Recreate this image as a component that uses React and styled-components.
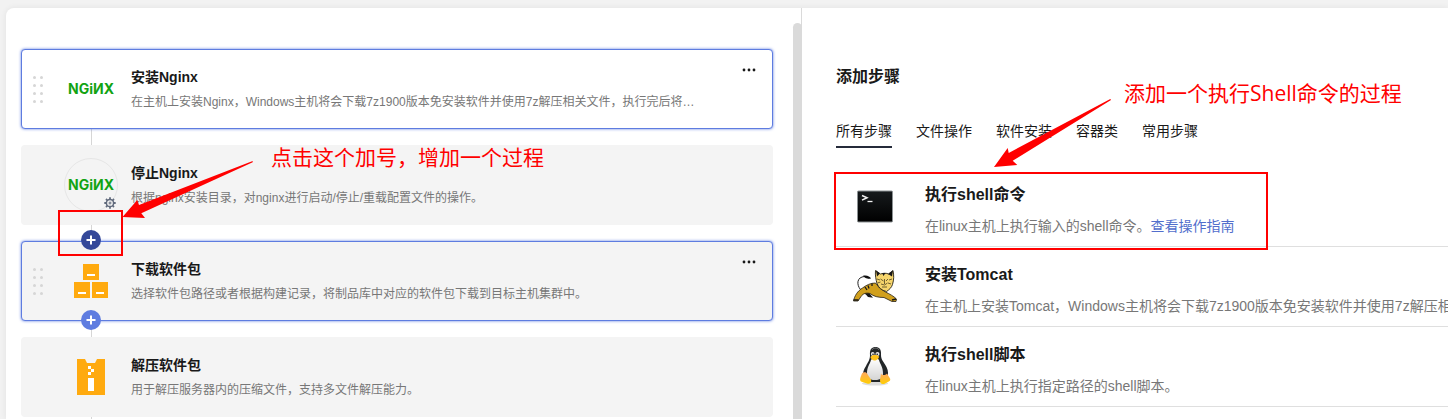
import React from 'react';
import styled, { createGlobalStyle, css } from 'styled-components';

const GlobalStyle = createGlobalStyle`
  *, *::before, *::after { box-sizing: border-box; }
  body {
    margin: 0;
    background: #f2f2f2;
    color: #191919;
    font-family: "Liberation Sans", "Noto Sans CJK SC", sans-serif;
  }
  button { font: inherit; color: inherit; background: none; border: 0; padding: 0; cursor: pointer; }
`;

const Page = styled.main`
  height: 100vh;
  padding: 8px 0 0 6px;
  overflow: hidden;
`;

const Workspace = styled.div`
  display: grid;
  grid-template-columns: minmax(0, 796fr) minmax(0, 646fr);
  height: 100%;
  background: #fff;
  border-top-left-radius: 8px;
  box-shadow: 0 0 6px rgba(0, 0, 0, 0.07);
`;

const FlowPane = styled.section`
  position: relative;
  padding: 41px 28px 0 15px;
  border-right: 1px solid #dadada;
`;

const ScrollThumb = styled.div`
  position: absolute;
  top: 15px;
  right: -1px;
  bottom: 0;
  width: 9px;
  background: #dadada;
  border-radius: 5px 5px 0 0;
`;

const StepList = styled.ol`
  display: flex;
  flex-direction: column;
  margin: 0;
  padding: 0;
  list-style: none;
`;

const StepItem = styled.li`
  &::after {
    content: "";
    display: block;
    height: 16px;
    margin-left: 70px;
    border-left: 1px solid #d6d6d6;
  }
`;

const Card = styled.article`
  position: relative;
  display: grid;
  grid-template-columns: 10px 54px minmax(0, 1fr) 24px;
  align-items: center;
  height: 80px;
  padding: 0 11px;
  border: 1px solid transparent;
  border-radius: 4px;
  background: ${(p) => (p.$plain ? '#fff' : '#f4f4f4')};
  ${(p) =>
    p.$active &&
    css`
      border-color: #5e7ce0;
      box-shadow: 0 0 3px #5e7ce0;
    `}
`;

const DragHandle = styled.div`
  display: grid;
  grid-template-columns: 3px 3px;
  gap: 5px 4px;
  span {
    width: 3px;
    height: 3px;
    border-radius: 50%;
    background: #d6d6d6;
  }
`;

const CardIcon = styled.div`
  grid-column: 2;
  position: relative;
  width: 54px;
  height: 54px;
  margin-left: 21px;
  border-radius: 50%;
  border: 1px solid ${(p) => (p.$ring ? '#e6e6e6' : 'transparent')};
  > svg:first-child { display: block; margin: -1px; }
`;

const Gear = styled.svg`
  position: absolute;
  right: 1px;
  bottom: 2px;
`;

const CardText = styled.div`
  grid-column: 3;
  margin: 0 37px 0 34px;
`;

const CardTitle = styled.h3`
  margin: 0 0 4px;
  font-size: 14px;
  line-height: 22px;
  font-weight: 700;
`;

const CardDesc = styled.p`
  margin: 0;
  overflow: hidden;
  color: #777;
  font-size: 12px;
  line-height: 20px;
  white-space: nowrap;
  text-overflow: ellipsis;
`;

const MoreButton = styled.button`
  align-self: start;
  height: 24px;
  margin-top: 8px;
  svg { display: block; margin: auto; }
`;

const AddButton = styled.button`
  position: absolute;
  left: 59px;
  ${(p) => (p.$edge === 'top' ? 'top: -12px;' : 'bottom: -10px;')}
  width: 20px;
  height: 20px;
  border-radius: 50%;
  background: ${(p) => (p.$edge === 'top' ? '#344899' : '#5e7ce0')};
  svg { display: block; }
`;

const LibraryPane = styled.section`
  position: relative;
  display: flex;
  flex-direction: column;
  padding: 57px 0 0 34px;
  overflow: hidden;
`;

const PaneTitle = styled.h2`
  margin: 0 0 31px;
  font-size: 16px;
  line-height: 24px;
  font-weight: 700;
`;

const Tabs = styled.nav`
  display: flex;
  gap: 24px;
  margin-bottom: 19px;
`;

const Tab = styled.button`
  height: 28px;
  padding-bottom: 4px;
  border-bottom: 2px solid ${(p) => (p.$active ? '#252b3a' : 'transparent')};
  font-size: 14px;
  line-height: 22px;
  white-space: nowrap;
`;

const Library = styled.ul`
  display: flex;
  flex-direction: column;
  margin: 0;
  padding: 0;
  list-style: none;
`;

const LibraryRow = styled.li`
  display: flex;
  gap: 26px;
  height: 80px;
  padding: 15px 0 0 15px;
  border-bottom: 1px solid #dfdfdf;
  white-space: nowrap;
  > svg { flex: none; }
`;

const RowText = styled.div`
  display: flex;
  flex-direction: column;
  gap: 9px;
  padding-top: 1px;
`;

const RowTitle = styled.h3`
  margin: 0;
  font-size: 16px;
  line-height: 24px;
  font-weight: 700;
`;

const RowDesc = styled.p`
  margin: 0;
  color: #777;
  font-size: 14px;
  line-height: 20px;
`;

const GuideLink = styled.a`
  color: #526ecc;
  text-decoration: none;
`;

const Highlight = styled.div`
  position: absolute;
  left: ${(p) => p.$x}px;
  top: ${(p) => p.$y}px;
  width: ${(p) => p.$w}px;
  height: ${(p) => p.$h}px;
  border: 2px solid #f00;
  pointer-events: none;
`;

const Arrow = styled.svg`
  position: absolute;
  left: ${(p) => p.$x}px;
  top: ${(p) => p.$y}px;
  fill: #f00;
  pointer-events: none;
`;

const Callout = styled.div`
  position: absolute;
  left: ${(p) => p.$x}px;
  top: ${(p) => p.$y}px;
  color: #f00;
  font-family: "Open Sans", "Noto Sans CJK SC", sans-serif;
  font-size: 21px;
  line-height: 28px;
  white-space: nowrap;
  pointer-events: none;
`;

const NginxLogo = () => (
  <svg width="54" height="54" viewBox="0 0 54 54" role="img" aria-label="Nginx">
    <text x="27" y="32" textAnchor="middle" fontFamily="Inter" fontSize="14" fontWeight="700" fill="#12a312">
      NGiИX
    </text>
  </svg>
);

const PackageIcon = () => (
  <svg width="54" height="54" viewBox="0 0 54 54" aria-hidden="true">
    <g fill="#ffaa0f">
      <rect x="19" y="10" width="16" height="16" />
      <rect x="10" y="28" width="16" height="16" />
      <rect x="28" y="28" width="16" height="16" />
    </g>
    <path d="M23 21h8M14 39h8M32 39h8" stroke="#fff" strokeWidth="2" />
  </svg>
);

const ZipIcon = () => (
  <svg width="54" height="54" viewBox="0 0 54 54" aria-hidden="true">
    <path d="M13 9h8l2 4h8l2-4h8v36H13z" fill="#ffaa0f" />
    <path d="M24 16h3v3h-3zM27 19h3v3h-3zM24 22h3v3h-3zM24 28h6v13h-6z" fill="#fff" />
  </svg>
);

const GearIcon = () => (
  <Gear width="12" height="12" viewBox="0 0 12 12" aria-hidden="true">
    <g fill="none" stroke="#626b7d">
      <circle cx="6" cy="6" r="3.6" strokeWidth="1.500" />
      <path d="M6 .3v2M6 9.700v2M.3 6h2M9.700 6h2M2 2l1.300 1.300M8.700 8.700L10 10M10 2L8.700 3.300M3.300 8.700L2 10" strokeWidth="1.800" />
      <circle cx="6" cy="6" r="1" strokeWidth="1" />
    </g>
  </Gear>
);

const TerminalIcon = () => (
  <svg width="48" height="48" viewBox="0 0 48 48" aria-hidden="true">
    <defs>
      <linearGradient id="screen" x1="0" y1="0" x2="0" y2="1">
        <stop offset="0" stopColor="#171b1d" />
        <stop offset="1" stopColor="#000" />
      </linearGradient>
    </defs>
    <rect x="6.500" y="9" width="35" height="31" rx="1" fill="url(#screen)" stroke="#8c9294" />
    <path d="M11 13.500l5 2.200-5 2.400" fill="none" stroke="#f2f2f2" strokeWidth="1.500" />
    <path d="M16.500 19.500h5" stroke="#f2f2f2" strokeWidth="1.300" />
  </svg>
);

const TomcatIcon = () => (
  <svg width="48" height="48" viewBox="0 0 48 48" aria-hidden="true">
    <path d="M11 29C6 25 5 17 11 15c3-1 5 0 7 1" fill="none" stroke="#222" strokeWidth="1" />
    <path d="M12 13.800c4-.9 7 .8 8 2.700-3 .8-6 .2-8-2.700z" fill="#111" />
    <path d="M10 27c2 4 5 5 7 8l5 .8-3-3.800-3-5z" fill="#161616" />
    <path d="M2.500 39c1-5 4-10 9-13 4-3 8-5 13-5l4 5 6 4c4 2 8 4 11 7l-.5 2.500h-4l-8-4c-6 0-10-1-14-4-4-1-7 0-9 3L7 39z" fill="#d1a01d" stroke="#252015" strokeWidth=".8" />
    <path d="M14 25l2 3M17 23.500l1 3M21 21.500v2.500" stroke="#171717" strokeWidth="1.300" />
    <path d="M24.500 8.500l5 3.500c3-1 6-1 8 0l4.500-3.500c1 5 1 9-.5 14-1 3-3 5-6 7-5-1-8-4-9.500-8-1-4-2-8-1.500-13z" fill="#f6d56c" stroke="#252015" strokeWidth=".9" />
    <path d="M25 8.500l4 3-3 3zM42 8.500l-5 3.500 4 2.500zM31 11l1.500 3 2-3z" fill="#171717" />
    <path d="M26 17l3 1M26.500 21l3-1M41 17l-3 1M40 22l-3-1M29.500 17l3 2M37 17l-2 2M33.500 17v5M30 22l3.500 1 3-2M31 25h5" fill="none" stroke="#4d4122" strokeWidth=".8" />
    <path d="M2.500 38h5M41 38l4-1" stroke="#171717" strokeWidth="1.500" />
  </svg>
);

const TuxIcon = () => (
  <svg width="48" height="48" viewBox="0 0 48 48" aria-hidden="true">
    <defs>
      <linearGradient id="belly" x1="0" y1="0" x2="0" y2="1">
        <stop offset="0" stopColor="#fff" />
        <stop offset="1" stopColor="#d4d4d4" />
      </linearGradient>
      <linearGradient id="foot" x1="0" y1="0" x2="0" y2="1">
        <stop offset="0" stopColor="#ffa860" />
        <stop offset="1" stopColor="#ffcf00" />
      </linearGradient>
    </defs>
    <ellipse cx="24" cy="41.500" rx="13" ry="2" fill="#ddd" />
    <path d="M19 13c-.5-6 2-8 5.500-8s6 2 5.500 8c0 5 3 7 5.500 12 2 4 2 8 .5 11l-5 4H17l-5-4c-1-4 1-9 3-12 2-4 4-6 4-11z" fill="#222628" />
    <path d="M21 8c1-2.500 6-2.500 7 0" fill="none" stroke="#777" strokeWidth="1" />
    <path d="M20 18c1-2 7-2 8 0 1 4 4 7 4 13 0 5-2 7-8 7s-8-2-8-7c0-6 3-9 4-13z" fill="url(#belly)" />
    <ellipse cx="21.700" cy="12" rx="1.800" ry="2" fill="#e8e8e8" />
    <ellipse cx="26.500" cy="12" rx="2" ry="2" fill="#e8e8e8" />
    <circle cx="22" cy="12.300" r=".8" fill="#111" />
    <circle cx="26.200" cy="12.300" r=".8" fill="#111" />
    <path d="M19.500 15c2-2.500 6-2.500 8.500-.5 0 2-2.500 4-4.500 4s-4-2-4-3.500z" fill="#ffc21a" />
    <path d="M11 31.500c1-1.500 4-2 5 0l4 6c1 3-1 5-4 4l-6-2c-2-2 0-5 1-8z" fill="url(#foot)" />
    <path d="M30 31.500c1 2 4 2 6 0l3 5c1 2-1 3-3 4l-3 1.500c-3 .5-4-1-4-4z" fill="url(#foot)" />
  </svg>
);

const Plus = () => (
  <svg width="20" height="20" viewBox="0 0 20 20" aria-hidden="true">
    <path d="M10 5.500v9M5.500 10h9" stroke="#fff" strokeWidth="2" />
  </svg>
);

const steps = [
  {
    title: '安装Nginx',
    desc: '在主机上安装Nginx，Windows主机将会下载7z1900版本免安装软件并使用7z解压相关文件，执行完后将自动启动Nginx服务。',
    icon: <NginxLogo />,
    active: true,
    plain: true,
  },
  {
    title: '停止Nginx',
    desc: '根据nginx安装目录，对nginx进行启动/停止/重载配置文件的操作。',
    icon: <NginxLogo />,
    ring: true,
  },
  {
    title: '下载软件包',
    desc: '选择软件包路径或者根据构建记录，将制品库中对应的软件包下载到目标主机集群中。',
    icon: <PackageIcon />,
    active: true,
    insert: true,
  },
  {
    title: '解压软件包',
    desc: '用于解压服务器内的压缩文件，支持多文件解压能力。',
    icon: <ZipIcon />,
  },
];

const tabs = ['所有步骤', '文件操作', '软件安装', '容器类', '常用步骤'];

const library = [
  { title: '执行shell命令', desc: '在linux主机上执行输入的shell命令。', link: '查看操作指南', icon: <TerminalIcon /> },
  {
    title: '安装Tomcat',
    desc: '在主机上安装Tomcat，Windows主机将会下载7z1900版本免安装软件并使用7z解压相关文件。',
    icon: <TomcatIcon />,
  },
  { title: '执行shell脚本', desc: '在linux主机上执行指定路径的shell脚本。', icon: <TuxIcon /> },
];

function StepCard({ step }) {
  return (
    <Card $active={step.active} $plain={step.plain}>
      {step.active && (
        <DragHandle>
          {Array.from({ length: 8 }, (_, i) => (
            <span key={i} />
          ))}
        </DragHandle>
      )}
      <CardIcon $ring={step.ring}>
        {step.icon}
        {step.ring && <GearIcon />}
      </CardIcon>
      <CardText>
        <CardTitle>{step.title}</CardTitle>
        <CardDesc>{step.desc}</CardDesc>
      </CardText>
      {step.active && (
        <MoreButton type="button" aria-label="更多">
          <svg width="14" height="4" viewBox="0 0 14 4" fill="#191919" aria-hidden="true">
            <circle cx="2" cy="2" r="1.400" />
            <circle cx="7" cy="2" r="1.400" />
            <circle cx="12" cy="2" r="1.400" />
          </svg>
        </MoreButton>
      )}
      {step.insert && (
        <>
          <AddButton type="button" $edge="top" aria-label="在上方添加步骤"><Plus /></AddButton>
          <AddButton type="button" $edge="bottom" aria-label="在下方添加步骤"><Plus /></AddButton>
        </>
      )}
    </Card>
  );
}

export default function App() {
  return (
    <>
      <GlobalStyle />
      <Page>
        <Workspace>
          <FlowPane>
            <StepList>
              {steps.map((step) => (
                <StepItem key={step.title}>
                  <StepCard step={step} />
                </StepItem>
              ))}
            </StepList>
            <ScrollThumb />
            <Highlight $x={52} $y={202} $w={65} $h={46} />
            <Arrow $x={116} $y={152} width="132" height="60" viewBox="122 160 132 60" aria-hidden="true">
              <path d="M122.500 217L137.300 200l1.700 5L252.700 161v1.300L141.300 213.300l3.700 4.700z" />
            </Arrow>
            <Callout $x={265} $y={135}>点击这个加号，增加一个过程</Callout>
          </FlowPane>
          <LibraryPane>
            <PaneTitle>添加步骤</PaneTitle>
            <Tabs>
              {tabs.map((name, i) => (
                <Tab key={name} type="button" $active={i === 0}>{name}</Tab>
              ))}
            </Tabs>
            <Library>
              {library.map((row) => (
                <LibraryRow key={row.title}>
                  {row.icon}
                  <RowText>
                    <RowTitle>{row.title}</RowTitle>
                    <RowDesc>
                      {row.desc}
                      {row.link && <GuideLink href="#guide">{row.link}</GuideLink>}
                    </RowDesc>
                  </RowText>
                </LibraryRow>
              ))}
            </Library>
            <Highlight $x={32} $y={164} $w={434} $h={78} />
            <Arrow $x={191} $y={90} width="120" height="70" viewBox="993 98 120 70" aria-hidden="true">
              <path d="M994 167l13.700-19 1 5L1110.300 99l.7 1-98.300 60.700 4.600 4.300z" />
            </Arrow>
            <Callout $x={322} $y={71}>添加一个执行Shell命令的过程</Callout>
          </LibraryPane>
        </Workspace>
      </Page>
    </>
  );
}
